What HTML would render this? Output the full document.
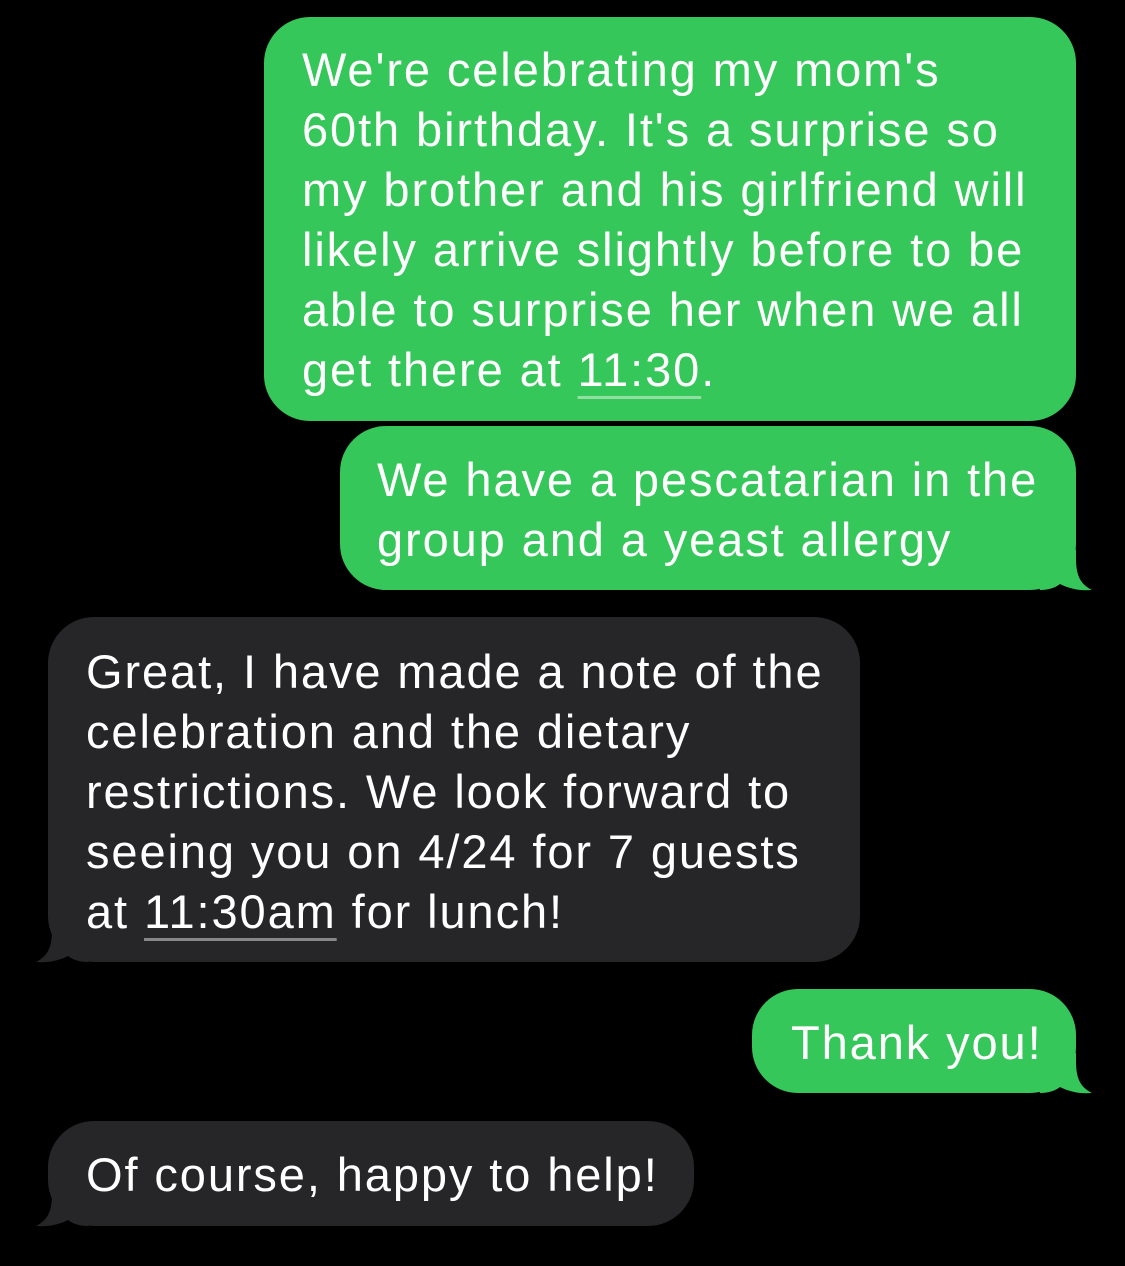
<!DOCTYPE html>
<html><head><meta charset="utf-8"><style>
html,body{margin:0;padding:0;background:#000;width:1125px;height:1266px;overflow:hidden}
body{position:relative;font-family:"Liberation Sans",Arial,sans-serif;color:#fff}
.b{position:absolute;border-radius:46px;box-sizing:border-box;font-size:47px;line-height:60px;white-space:nowrap;letter-spacing:1.9px}
.g{background:#35c759}
.k{background:#262628}
.u{text-decoration:underline;text-decoration-thickness:3px;text-underline-offset:10px;text-decoration-color:rgba(255,255,255,.45)}
svg{position:absolute}
</style></head><body>
<div class="b g" style="left:264px;top:17px;width:812px;height:404px;padding:23px 0 0 38px">We're celebrating my mom's<br>60th birthday. It's a surprise so<br>my brother and his girlfriend will<br>likely arrive slightly before to be<br>able to surprise her when we all<br>get there at <span class="u">11:30</span>.</div>

<div class="b g" style="left:340px;top:426px;width:736px;height:164px;padding:24px 0 0 37px">We have a pescatarian in the<br>group and a yeast allergy</div>
<svg style="left:1040px;top:550px" width="60" height="42" viewBox="0 0 60 42"><path d="M36 0 L36 8 C36 25 40 34 52 40 C40 41 30 39 20 34 C16 37 10 40 0 40 L0 0 Z" fill="#35c759"/></svg>

<div class="b k" style="left:48px;top:617px;width:812px;height:345px;padding:25px 0 0 38px">Great, I have made a note of the<br>celebration and the dietary<br>restrictions. We look forward to<br>seeing you on 4/24 for 7 guests<br>at <span class="u">11:30am</span> for lunch!</div>
<svg style="left:28px;top:922px" width="60" height="42" viewBox="0 0 60 42"><path d="M24 0 L24 8 C24 25 20 34 8 40 C20 41 30 39 40 34 C44 37 50 40 60 40 L60 0 Z" fill="#262628"/></svg>

<div class="b g" style="left:752px;top:989px;width:324px;height:104px;padding:24px 0 0 39px">Thank you!</div>
<svg style="left:1040px;top:1053px" width="60" height="42" viewBox="0 0 60 42"><path d="M36 0 L36 8 C36 25 40 34 52 40 C40 41 30 39 20 34 C16 37 10 40 0 40 L0 0 Z" fill="#35c759"/></svg>

<div class="b k" style="left:48px;top:1121px;width:646px;height:105px;padding:24px 0 0 38px">Of course, happy to help!</div>
<svg style="left:28px;top:1186px" width="60" height="42" viewBox="0 0 60 42"><path d="M24 0 L24 8 C24 25 20 34 8 40 C20 41 30 39 40 34 C44 37 50 40 60 40 L60 0 Z" fill="#262628"/></svg>
</body></html>
